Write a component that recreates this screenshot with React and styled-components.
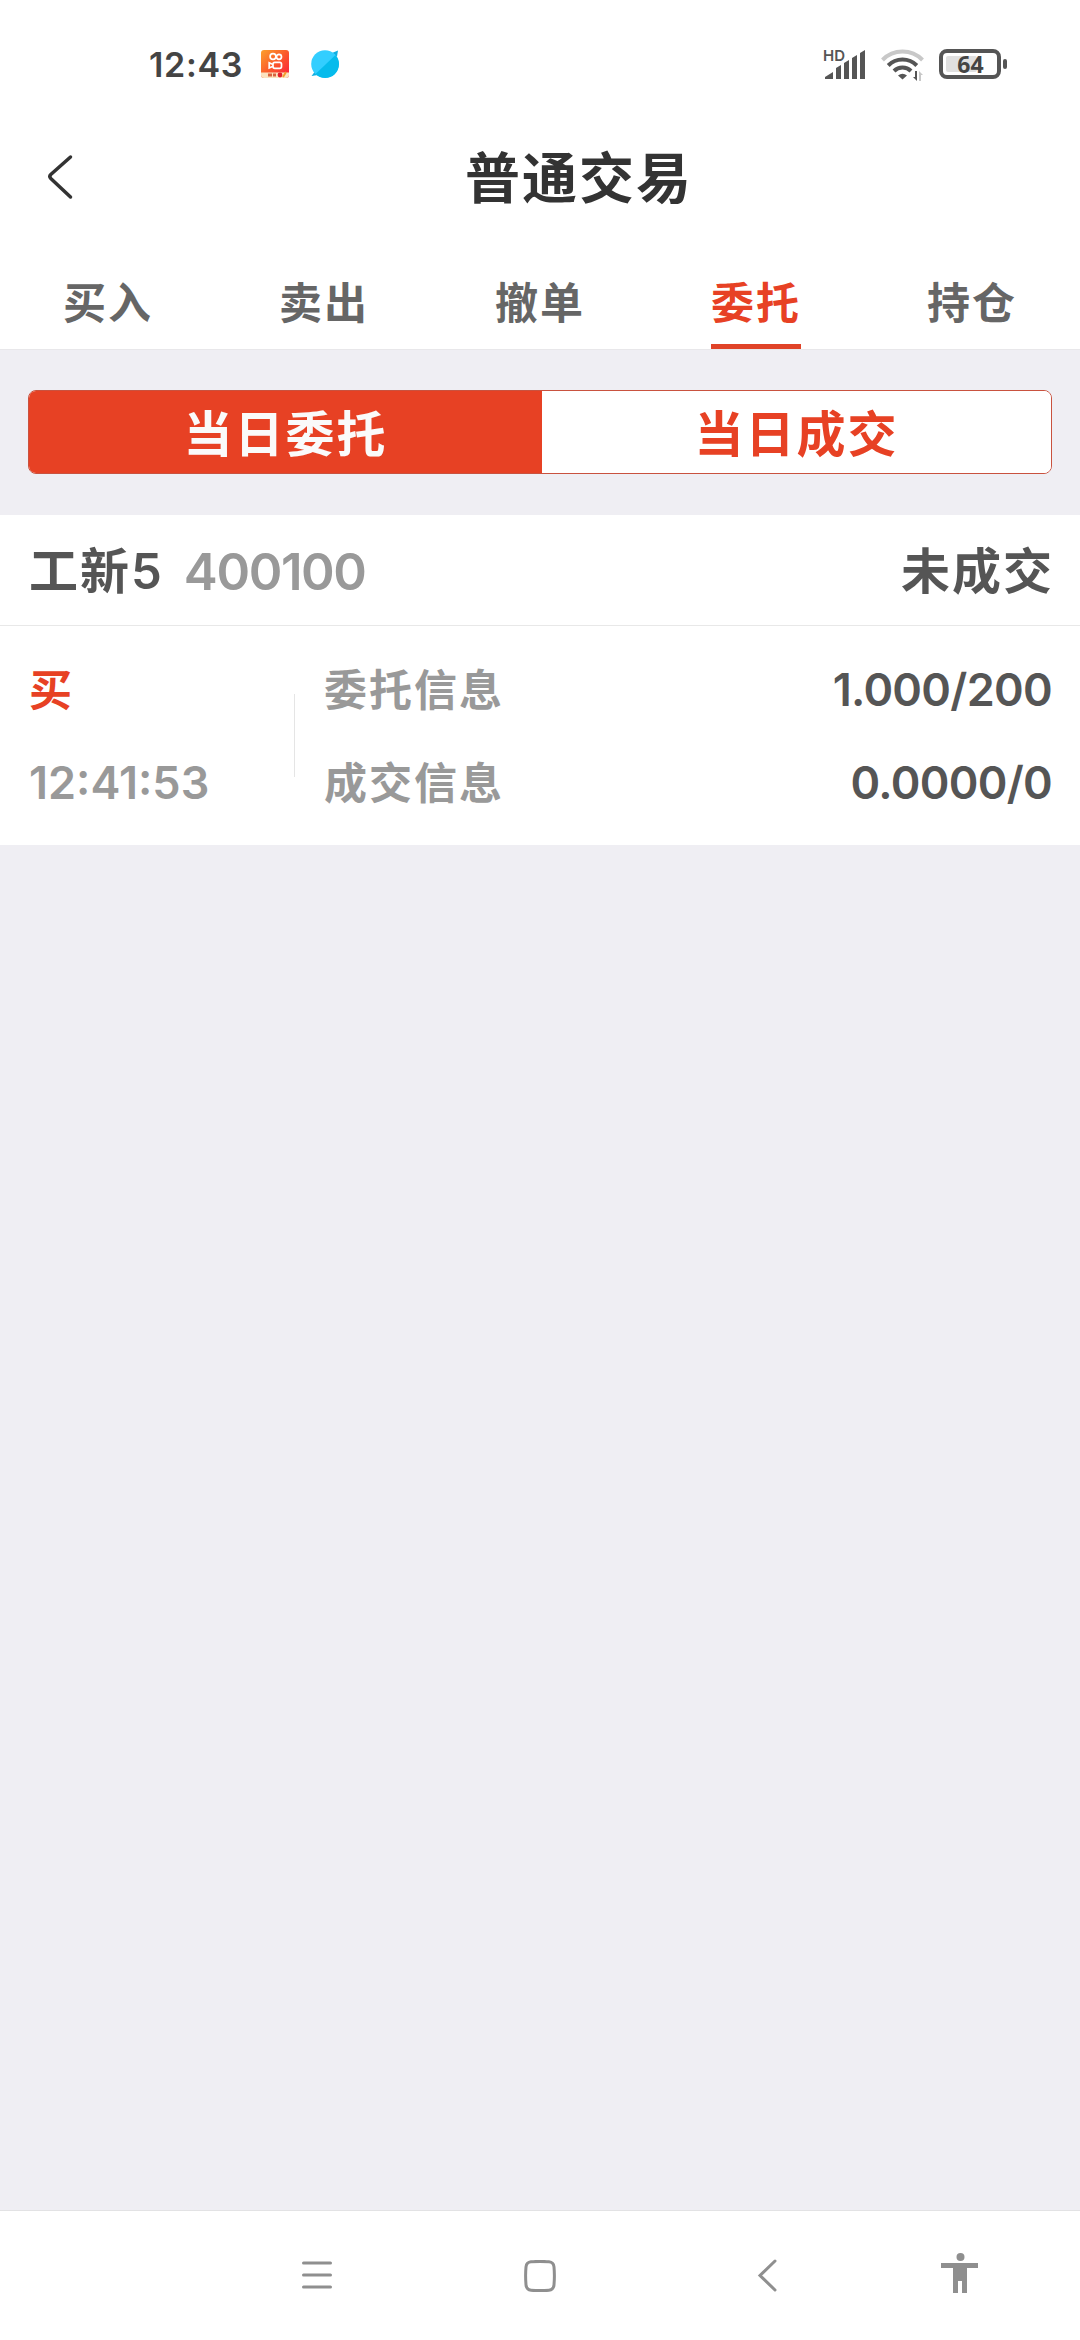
import React from 'react'
import styled, { createGlobalStyle } from 'styled-components'

const GlobalStyle = createGlobalStyle`
    * {
        box-sizing: border-box;
    }
    body {
        margin: 0;
        background: #efeef3;
        font-family: Inter, "Noto Sans CJK SC", sans-serif;
    }
`

const Screen = styled.div`
    display: flex;
    flex-direction: column;
    width: 1080px;
    height: 2340px;
    background: #efeef3;
    overflow: hidden;
`

const StatusBar = styled.div`
    display: flex;
    align-items: center;
    justify-content: space-between;
    height: 128px;
    padding: 0 72px 0 149px;
    background: #fff;
`

const StatusGroup = styled.div`
    display: flex;
    align-items: center;
    gap: ${props => props.$gap}px;
`

const Clock = styled.span`
    width: 90px;
    padding-top: 2px;
    font-size: 34px;
    font-weight: 600;
    line-height: 40px;
    letter-spacing: 0.7px;
    color: #444;
    white-space: nowrap;
`

const Signal = styled.svg`
    overflow: visible;
`

const Header = styled.header`
    display: grid;
    grid-template-columns: 76px 1fr;
    align-items: center;
    height: 98px;
    background: #fff;
`

const BackIcon = styled.svg`
    justify-self: end;
`

const Title = styled.h1`
    margin: 0;
    padding-top: 3px;
    font-size: 55px;
    font-weight: 700;
    line-height: 95px;
    letter-spacing: 2px;
    text-align: center;
    text-indent: 2px;
    color: #333;
`

const Tabs = styled.nav`
    display: flex;
    height: 124px;
    background: #fff;
    border-bottom: 1px solid #e8e7ea;
`

const Tab = styled.div`
    flex: 1;
    display: flex;
    justify-content: center;
    span {
        height: 123px;
        padding-top: 45px;
        font-size: 43px;
        font-weight: 700;
        line-height: 64px;
        letter-spacing: 2px;
        color: ${props => props.$active ? '#e74124' : '#666'};
        border-bottom: ${props => props.$active ? '5px solid #e04328' : 'none'};
    }
`

const SegmentWrap = styled.div`
    padding: 40px 28px 41px;
`

const Segment = styled.div`
    display: grid;
    grid-template-columns: 513px 1fr;
    height: 84px;
    border: 1px solid #c9523f;
    border-radius: 8px;
    overflow: hidden;
    background: #fff;
`

const SegmentItem = styled.div`
    font-size: 49px;
    font-weight: 700;
    line-height: 87px;
    letter-spacing: 2px;
    text-align: center;
    color: ${props => props.$active ? '#fafafa' : '#e74124'};
    background: ${props => props.$active ? '#e74124' : '#fff'};
`

const Order = styled.section`
    background: #fff;
`

const OrderHead = styled.div`
    display: flex;
    align-items: center;
    height: 111px;
    padding: 3px 26px 0 29px;
    border-bottom: 1px solid #e8e8e8;
    font-size: 49px;
    font-weight: 700;
    line-height: 107px;
    letter-spacing: 2px;
    color: #555;
`

const Digits = styled.span`
    font-size: ${props => props.$size}px;
    font-weight: 600;
    letter-spacing: ${props => props.$spacing || 0}px;
`

const Code = styled(Digits)`
    margin-left: 22px;
    color: #999;
`

const Status = styled.span`
    margin-left: auto;
`

const OrderBody = styled.div`
    display: flex;
    align-items: center;
    height: 219px;
    padding: 0 28px 0 29px;
    font-size: 43px;
    font-weight: 700;
`

const Column = styled.div`
    display: flex;
    flex-direction: column;
    width: ${props => props.$width ? props.$width + 'px' : 'auto'};
    color: ${props => props.color};
    line-height: 93px;
    white-space: nowrap;
`

const Values = styled(Column)`
    margin-left: auto;
    text-align: right;
`

const Label = styled.span`
    height: 93px;
    padding-top: 2px;
    line-height: 91px;
    letter-spacing: 2px;
    color: ${props => props.$buy ? '#e74124' : 'inherit'};
`

const Divider = styled.div`
    width: 1px;
    height: 83px;
    margin-right: 29px;
    background: #e5e5e5;
`

const NavBar = styled.footer`
    display: flex;
    align-items: center;
    height: 130px;
    margin-top: auto;
    padding-left: 301px;
    background: #fff;
    border-top: 1px solid #e2e2e4;
`

const NavIcon = styled.svg`
    margin-right: ${props => props.$gap}px;
`

const tabs = ['买入', '卖出', '撤单', '委托', '持仓']

const App = () => {
    return (
        <>
            <GlobalStyle />
            <Screen>
                <StatusBar>
                    <StatusGroup $gap={22}>
                        <Clock>12:43</Clock>
                        <svg width="28" height="28" viewBox="0 0 28 28">
                            <defs>
                                <linearGradient id="video" x1="0" y1="0" x2="1" y2="1">
                                    <stop offset="0" stopColor="#fca02c" />
                                    <stop offset="0.5" stopColor="#fb5a2c" />
                                    <stop offset="1" stopColor="#fb1a3c" />
                                </linearGradient>
                            </defs>
                            <rect width="28" height="28" rx="3" fill="url(#video)" />
                            <g fill="none" stroke="#fff" strokeWidth="1.7">
                                <circle cx="12" cy="6.5" r="2.9" />
                                <circle cx="18" cy="6.8" r="2.5" />
                                <rect x="12" y="12.3" width="8.5" height="6" rx="1.8" />
                                <path d="M12 14.5 8.2 12.8v5.2l3.8-1.7" />
                            </g>
                            <path d="M0 22.5h28V25a3 3 0 0 1-3 3H3a3 3 0 0 1-3-3z" fill="#fbe3c0" />
                            <path d="M7 23.5h4v3H7zM12 23.5h3v3h-3z" fill="#d9623f" />
                            <circle cx="19" cy="25" r="2.4" fill="#e3202c" />
                            <path d="M22 27l3-5" stroke="#f59a2c" strokeWidth="2" />
                        </svg>
                        <svg width="30" height="28" viewBox="0 0 30 28">
                            <path d="M21 3l6-2.5-1 6zM5 20l-4.500 6 6.500-1z" fill="#12aee0" />
                            <circle cx="14" cy="14" r="13.8" fill="#33ceff" />
                            <path d="M24.5 5A13.8 13.8 0 0 1 4.5 24z" fill="#06bbec" />
                        </svg>
                    </StatusGroup>
                    <StatusGroup $gap={15}>
                        <Signal width="42" height="32" viewBox="0 0 42 32">
                            <text x="-1" y="12.5" fontSize="15" fontWeight="600" fill="#555">HD</text>
                            <path d="M1 31v-2l8-5v7zM12 20l5-3v14h-5zM20 15l5-3v19h-5zM28 10l5-3v24h-5zM36 5l5-3v29h-5z" fill="#555" />
                        </Signal>
                        <svg width="43" height="34" viewBox="0 0 43 34">
                            <g fill="none" strokeWidth="4">
                                <path d="M1.5 13a28 28 0 0 1 40 0" stroke="#c8c8c8" />
                                <path d="M7.2 18.5a20 20 0 0 1 28.6 0" stroke="#555" />
                                <path d="M13 24a12 12 0 0 1 17 0" stroke="#555" />
                            </g>
                            <path d="M17 28.5q4.500-3.500 9 0l-4.500 4z" fill="#555" />
                            <path d="M36 24v10l-4-4h2v-6z" fill="#555" />
                            <path d="M38 34V24l4 4h-2v6z" fill="#c8c8c8" />
                        </svg>
                        <svg width="69" height="32" viewBox="0 0 69 32">
                            <rect x="2" y="3" width="58" height="26" rx="6" fill="#fff" stroke="#555" strokeWidth="4" />
                            <rect x="7" y="8" width="31" height="16" rx="2" fill="#e0e0e0" />
                            <text x="31.5" y="24.5" fontSize="23" fontWeight="700" fontFamily="Noto Sans" textAnchor="middle" fill="#444">64</text>
                            <rect x="64" y="11" width="4" height="10" rx="2" fill="#555" />
                        </svg>
                    </StatusGroup>
                </StatusBar>
                <Header>
                    <BackIcon width="30" height="46" viewBox="0 0 30 46" fill="none" stroke="#333" strokeWidth="3.5" strokeLinecap="round">
                        <path d="M24.5 3 4.8 20.500q-2 2 0 4L24.500 43" />
                    </BackIcon>
                    <Title>普通交易</Title>
                </Header>
                <Tabs>
                    {tabs.map(tab => (
                        <Tab key={tab} $active={tab === '委托'}>
                            <span>{tab}</span>
                        </Tab>
                    ))}
                </Tabs>
                <SegmentWrap>
                    <Segment>
                        <SegmentItem $active>当日委托</SegmentItem>
                        <SegmentItem>当日成交</SegmentItem>
                    </Segment>
                </SegmentWrap>
                <Order>
                    <OrderHead>
                        <span>工新<Digits $size={49}>5</Digits></span>
                        <Code $size={51} $spacing={-1.4}>400100</Code>
                        <Status>未成交</Status>
                    </OrderHead>
                    <OrderBody>
                        <Column $width={265} color="#999">
                            <Label $buy>买</Label>
                            <Digits $size={45}>12:41:53</Digits>
                        </Column>
                        <Divider />
                        <Column color="#999">
                            <Label>委托信息</Label>
                            <Label>成交信息</Label>
                        </Column>
                        <Values color="#555">
                            <Digits $size={45} $spacing={-0.7}>1.000/200</Digits>
                            <Digits $size={45} $spacing={-0.7}>0.0000/0</Digits>
                        </Values>
                    </OrderBody>
                </Order>
                <NavBar>
                    <NavIcon $gap={191} width="32" height="32" viewBox="0 0 32 32" stroke="#8f8f8f" strokeWidth="3" strokeLinecap="round">
                        <path d="M2.5 3h27M2.5 15h27M2.5 27h27" />
                    </NavIcon>
                    <NavIcon $gap={200} width="32" height="32" viewBox="0 0 32 32" fill="none" stroke="#8f8f8f" strokeWidth="3">
                        <path d="M7 1.8q9-.8 18 0 4.500.5 5 5 .8 9 0 18-.5 5-5 5.400-9 .8-18 0-4.500-.4-5-5.400-.8-9 0-18 .5-4.500 5-5z" />
                    </NavIcon>
                    <NavIcon $gap={163} width="22" height="34" viewBox="0 0 22 34" fill="none" stroke="#8f8f8f" strokeWidth="3" strokeLinecap="round">
                        <path d="M19 2 4 16.500 19 31" />
                    </NavIcon>
                    <NavIcon $gap={0} width="38" height="46" viewBox="0 0 38 46" fill="#8f8f8f">
                        <circle cx="19.5" cy="4" r="4" />
                        <path d="M0 10h37v5H26v25h-5V28h-4v12h-5V15H0z" />
                    </NavIcon>
                </NavBar>
            </Screen>
        </>
    )
}

export default App
